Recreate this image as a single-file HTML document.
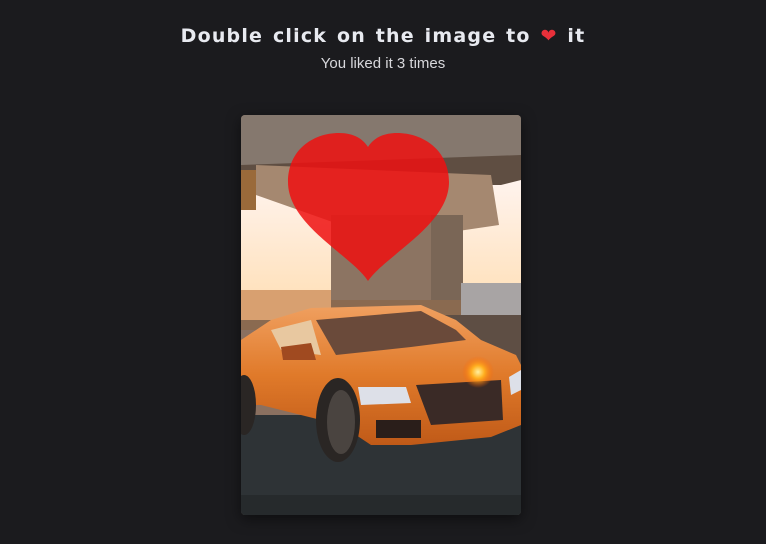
<!DOCTYPE html>
<html><head><style>
body{margin:0;background:#1b1b1e;width:766px;height:544px;overflow:hidden;font-family:"Liberation Sans",sans-serif}
h1{position:absolute;left:0;width:766px;top:25px;margin:0;text-align:center;font-family:"Comic Sans MS","DejaVu Sans",sans-serif;font-weight:bold;font-size:19px;letter-spacing:1.2px;word-spacing:2px;color:#e8eaf0}
p{position:absolute;left:0;width:766px;top:55px;margin:0;text-align:center;font-size:15px;color:#d8d8dc}
.img{position:absolute;left:241px;top:115px;width:280px;height:400px;border-radius:4px;overflow:hidden;box-shadow:0 4px 14px rgba(0,0,0,.5)}
</style></head><body>
<h1>Double click on the image to <span style="color:#e8303a">❤</span> it</h1>
<p>You liked it 3 times</p>
<div class="img">
<svg width="280" height="400" viewBox="0 0 280 400">
<defs>
<linearGradient id="sky" x1="0" y1="0" x2="0" y2="1"><stop offset="0" stop-color="#fff4f0"/><stop offset="1" stop-color="#ffe0b8"/></linearGradient>
<linearGradient id="car" x1="0" y1="0" x2="0" y2="1"><stop offset="0" stop-color="#f0a060"/><stop offset=".5" stop-color="#e07a2a"/><stop offset="1" stop-color="#c05a18"/></linearGradient>
<radialGradient id="flare"><stop offset="0" stop-color="#fff0a0"/><stop offset=".4" stop-color="#ffb020"/><stop offset="1" stop-color="#ff6000" stop-opacity="0"/></radialGradient>
</defs>
<rect width="280" height="400" fill="#8a7060"/>
<rect x="0" y="60" width="280" height="130" fill="url(#sky)"/>
<rect x="0" y="0" width="280" height="50" fill="#85786e"/>
<polygon points="0,50 280,40 280,65 260,70 0,70" fill="#5f4e42"/>
<rect x="0" y="55" width="15" height="40" fill="#9a6a3a"/>
<polygon points="15,50 250,60 258,110 190,120 100,110 15,80" fill="#a58870"/>
<rect x="90" y="100" width="130" height="95" fill="#8c7462"/>
<rect x="190" y="100" width="32" height="95" fill="#7a6656"/>
<rect x="0" y="185" width="280" height="30" fill="#8a6a50"/>
<rect x="220" y="168" width="60" height="40" fill="#a8a4a4"/>
<rect x="0" y="175" width="90" height="30" fill="#d8a070"/>
<rect x="0" y="300" width="280" height="100" fill="#2e3336"/>
<rect x="200" y="200" width="80" height="80" fill="#5e4e44"/>
<path d="M0,225 L30,205 L70,193 L180,190 L215,205 L240,225 L275,240 L280,250 L280,310 L250,322 L170,330 L130,330 L100,310 L60,300 L20,290 L0,290 Z" fill="url(#car)"/>
<path d="M75,205 L180,196 L215,215 L225,225 L170,232 L95,240 Z" fill="#6a4a3a"/>
<path d="M30,215 L70,205 L80,240 L40,235 Z" fill="#e8c8a0"/>
<path d="M40,232 L70,228 L75,245 L42,245 Z" fill="#a04a20"/>
<path d="M175,270 L260,265 L262,305 L190,310 Z" fill="#3a2a26"/>
<path d="M117,272 L165,272 L170,288 L120,290 Z" fill="#dde0e8"/>
<path d="M268,262 L280,255 L280,275 L270,280 Z" fill="#dde0e8"/>
<rect x="135" y="305" width="45" height="18" fill="#2a1e1a"/>
<ellipse cx="97" cy="305" rx="22" ry="42" fill="#2a2624"/>
<ellipse cx="100" cy="307" rx="14" ry="32" fill="#4a4440"/>
<ellipse cx="3" cy="290" rx="12" ry="30" fill="#2a2624"/>
<circle cx="237" cy="257" r="16" fill="url(#flare)"/>
<rect x="0" y="380" width="280" height="20" fill="#262a2c"/>
<path d="M127,166 C110,140 47,110 47,67 C47,35 72,18 98,18 C113,18 122,24 127,32 C132,24 141,18 156,18 C182,18 208,35 208,67 C208,110 145,140 127,166 Z" fill="#ee1010" opacity=".85"/>
</svg>
</div>
</body></html>
